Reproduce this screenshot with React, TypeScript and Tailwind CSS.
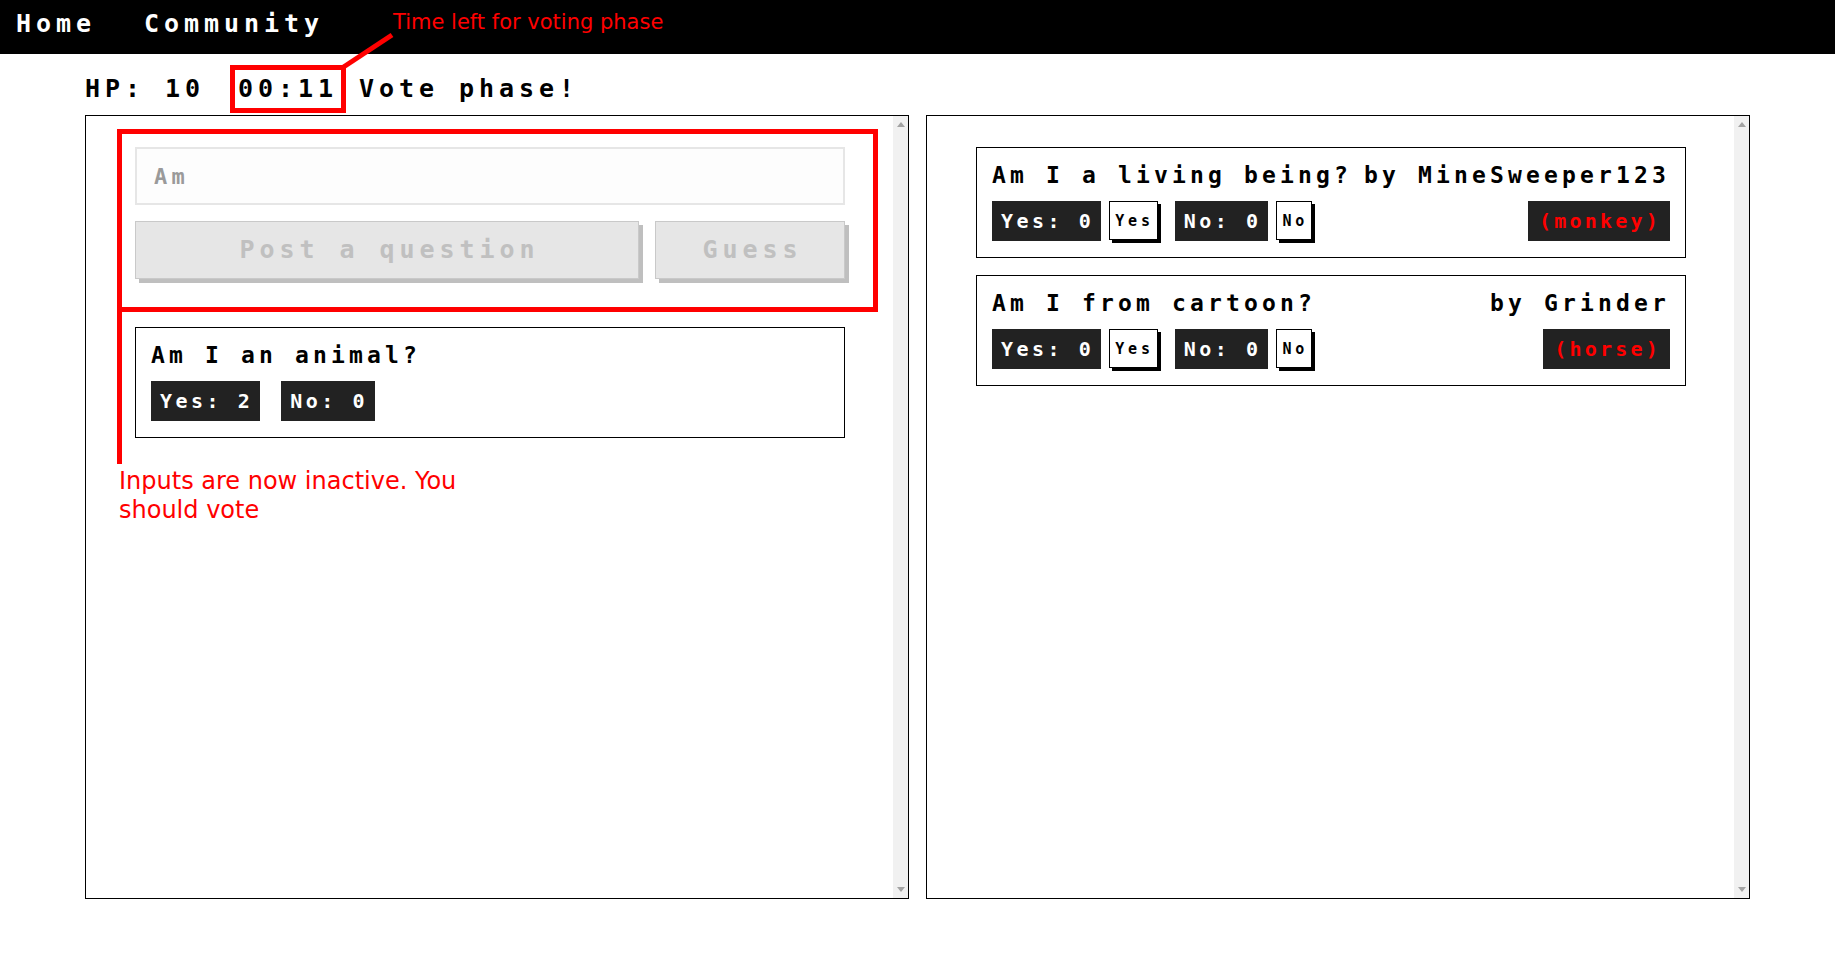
import React from "react";

function Badge({ children, red = false }: { children: React.ReactNode; red?: boolean }) {
  return (
    <div
      className={
        "h-[40px] bg-[#222222] flex items-center text-[20px] leading-[20px] whitespace-pre " +
        (red ? "text-[#ff0000] tracking-[3.2px] pl-[11px] pr-[9px]" : "text-white tracking-[3.5px] pl-[9px] pr-[7px]")
      }
    >
      {children}
    </div>
  );
}

function SmallBtn({ children }: { children: React.ReactNode }) {
  return (
    <button className="h-[39px] self-start border border-black bg-white shadow-[3px_3px_0_#000] text-[15px] tracking-[3.8px] leading-[16px] pl-[5px] pr-[3px] text-black font-bold">
      {children}
    </button>
  );
}

function Card({
  title,
  by,
  yes,
  no,
  answer,
  vote = false,
}: {
  title: string;
  by?: string;
  yes: number;
  no: number;
  answer?: string;
  vote?: boolean;
}) {
  return (
    <div className="border border-black pt-[14px] pb-[16px] px-[15px]">
      <div className="h-[26px] flex items-center justify-between text-[23px] tracking-[4.15px] leading-[26px] whitespace-pre">
        <span>{title}</span>
        {by && <span>{by}</span>}
      </div>
      <div className="mt-[13px] h-[40px] flex items-start">
        <Badge>{`Yes: ${yes}`}</Badge>
        {vote ? (
          <>
            <div className="ml-[8px]">
              <SmallBtn>Yes</SmallBtn>
            </div>
            <div className="ml-[17px]">
              <Badge>{`No: ${no}`}</Badge>
            </div>
            <div className="ml-[8px]">
              <SmallBtn>No</SmallBtn>
            </div>
            <div className="ml-auto">
              <Badge red>{answer}</Badge>
            </div>
          </>
        ) : (
          <div className="ml-[21px]">
            <Badge>{`No: ${no}`}</Badge>
          </div>
        )}
      </div>
    </div>
  );
}

function Scrollbar() {
  return (
    <div className="w-[15px] shrink-0 bg-[#f1f1f1] flex flex-col justify-between items-center pt-[6px] pb-[6px]">
      <svg width="8" height="5" viewBox="0 0 8 5">
        <polygon points="4,0 8,5 0,5" fill="#a3a3a3" />
      </svg>
      <svg width="8" height="5" viewBox="0 0 8 5">
        <polygon points="0,0 8,0 4,5" fill="#a3a3a3" />
      </svg>
    </div>
  );
}

function Panel({ children }: { children: React.ReactNode }) {
  return (
    <div className="w-[824px] h-[784px] border border-black flex">
      <div className="flex-1 overflow-hidden pt-[31px] pl-[49px] pr-[48px]">{children}</div>
      <Scrollbar />
    </div>
  );
}

export default function App() {
  return (
    <div className="relative min-h-[967px] bg-white text-black font-['DejaVu_Sans_Mono',monospace] font-bold">
      <header className="h-[54px] bg-black flex items-center pb-[7px] pl-[16px] text-white text-[25px] tracking-[4.95px] leading-[28px]">
        <span>Home</span>
        <span className="ml-[48px]">Community</span>
      </header>

      <div className="flex items-center pl-[85px] pt-[11px] pb-[2px] text-[25px] tracking-[4.95px] leading-[28px] whitespace-pre">
        <span>HP: 10</span>
        <span className="ml-[25px] border-[5px] border-[#ff0000] h-[48px] w-[116px] flex items-center pl-[3px]">00:11</span>
        <span className="ml-[13px]">Vote phase!</span>
      </div>

      <div className="flex gap-[17px] pl-[85px]">
        <Panel>
          <input
            disabled
            defaultValue="Am"
            className="block w-full h-[58px] border-2 border-[#e6e6e6] bg-[#fdfdfd] pl-[17px] text-[22px] tracking-[4.26px] text-[#9a9a9a] font-bold outline-none"
          />
          <div className="mt-[16px] flex gap-[16px]">
            <button
              disabled
              className="w-[504px] h-[58px] border border-[#c9c9c9] bg-[#e6e6e6] shadow-[4px_4px_0_#bfbfbf] text-[25px] tracking-[4.95px] text-[#c0c0c0] font-bold pl-[5px]"
            >
              Post a question
            </button>
            <button
              disabled
              className="w-[190px] h-[58px] border border-[#c9c9c9] bg-[#e6e6e6] shadow-[4px_4px_0_#bfbfbf] text-[25px] tracking-[4.95px] text-[#c0c0c0] font-bold pl-[5px]"
            >
              Guess
            </button>
          </div>
          <div className="mt-[48px]">
            <Card title="Am I an animal?" yes={2} no={0} />
          </div>
        </Panel>

        <Panel>
          <div className="flex flex-col gap-[17px]">
            <Card title="Am I a living being?" by="by MineSweeper123" yes={0} no={0} answer="(monkey)" vote />
            <Card title="Am I from cartoon?" by="by Grinder" yes={0} no={0} answer="(horse)" vote />
          </div>
        </Panel>
      </div>

      {/* annotations */}
      <div className="absolute left-[117px] top-[129px] w-[761px] h-[183px] border-[5px] border-[#ff0000] pointer-events-none" />
      <div className="absolute left-[117px] top-[310px] w-[5px] h-[154px] bg-[#ff0000]" />
      <div className="absolute left-[119px] top-[467px] text-[24px] leading-[29px] text-[#ff0000] font-normal font-['DejaVu_Sans',sans-serif]">
        Inputs are now inactive. You
        <br />
        should vote
      </div>
      <div className="absolute left-[393px] top-[10px] text-[21px] leading-[24px] text-[#ff0000] font-normal font-['DejaVu_Sans',sans-serif] whitespace-nowrap">
        Time left for voting phase
      </div>
      <svg className="absolute left-0 top-0 pointer-events-none" width="420" height="90">
        <line x1="342" y1="68" x2="392" y2="35" stroke="#ff0000" strokeWidth="5" />
      </svg>
    </div>
  );
}
